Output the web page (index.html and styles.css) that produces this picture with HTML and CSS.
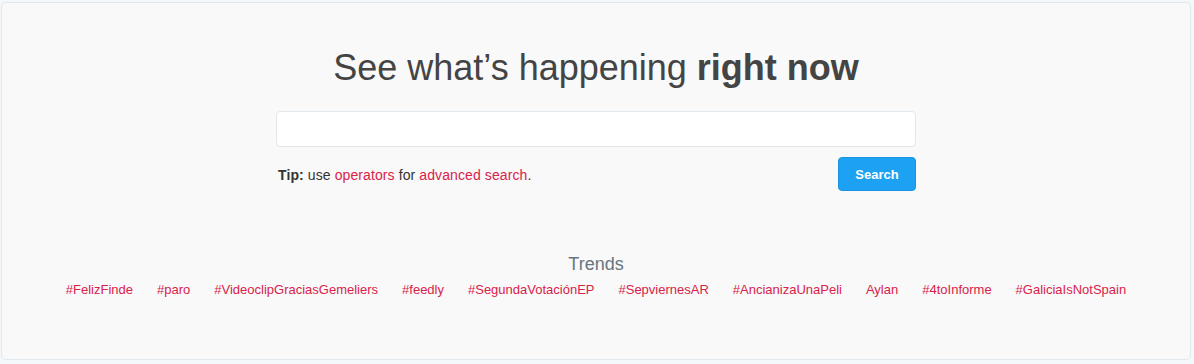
FILE: index.html
```html
<!DOCTYPE html>
<html>
<head>
<meta charset="utf-8">
<link rel="stylesheet" href="styles.css">
</head>
<body>
<div class="card">
  <h1 class="headline">See what’s happening <b>right now</b></h1>
  <form class="search">
    <input class="search-input" type="text">
    <div class="search-row">
      <p class="tip"><b>Tip:</b> use <a href="#">operators</a> for <a href="#">advanced search</a>.</p>
      <button class="search-btn" type="button">Search</button>
    </div>
  </form>
  <div class="trends">
    <h2 class="trends-title">Trends</h2>
    <ul class="trend-list">
      <li><a href="#">#FelizFinde</a></li>
      <li><a href="#">#paro</a></li>
      <li><a href="#">#VideoclipGraciasGemeliers</a></li>
      <li><a href="#">#feedly</a></li>
      <li><a href="#">#SegundaVotaciónEP</a></li>
      <li><a href="#">#SepviernesAR</a></li>
      <li><a href="#">#AncianizaUnaPeli</a></li>
      <li><a href="#">Aylan</a></li>
      <li><a href="#">#4toInforme</a></li>
      <li><a href="#">#GaliciaIsNotSpain</a></li>
    </ul>
  </div>
</div>
</body>
</html>
```
FILE: styles.css
```css
html, body {
  margin: 0;
  padding: 0;
}
body {
  background: #f5f8fa;
  font-family: "Liberation Sans", Arial, sans-serif;
  color: #333;
  padding: 2px 3px 4px 1px;
}
.card {
  height: 356px;
  background: #f9f9f9;
  border: 1px solid #e1e8ed;
  border-radius: 5px;
  display: flex;
  flex-direction: column;
  align-items: center;
}
.headline {
  margin: 43px 0 0;
  font-size: 36px;
  font-weight: normal;
  color: #444;
  line-height: 44px;
  letter-spacing: 0;
}
.headline b {
  font-weight: bold;
}
.search {
  width: 640px;
  margin: 21px 0 0;
}
.search-input {
  display: block;
  box-sizing: border-box;
  width: 640px;
  height: 36px;
  margin: 0;
  background: #fff;
  border: 1px solid #e1e8ed;
  border-radius: 4px;
  outline: none;
}
.search-row {
  display: flex;
  justify-content: space-between;
  align-items: center;
  margin-top: 10px;
  padding-left: 2px;
}
.tip {
  margin: 0;
  padding-top: 2px;
  font-size: 14px;
  letter-spacing: 0.1px;
  color: #333;
}
.tip a, .trend-list a {
  color: #d8224a;
  text-decoration: none;
}
.search-btn {
  box-sizing: border-box;
  width: 78px;
  height: 34px;
  background: #1da1f2;
  border: 1px solid #1a94e0;
  border-radius: 4px;
  color: #fff;
  font-family: "Liberation Sans", Arial, sans-serif;
  font-weight: bold;
  font-size: 13px;
  padding: 0;
}
.trends {
  margin-top: 63px;
  display: flex;
  flex-direction: column;
  align-items: center;
}
.trends-title {
  margin: 0;
  font-size: 18px;
  font-weight: normal;
  color: #66757f;
  line-height: 20px;
}
.trend-list {
  list-style: none;
  margin: 8px 0 0;
  padding: 0;
  display: flex;
  gap: 24px;
  font-size: 13px;
  line-height: 16px;
}
```
